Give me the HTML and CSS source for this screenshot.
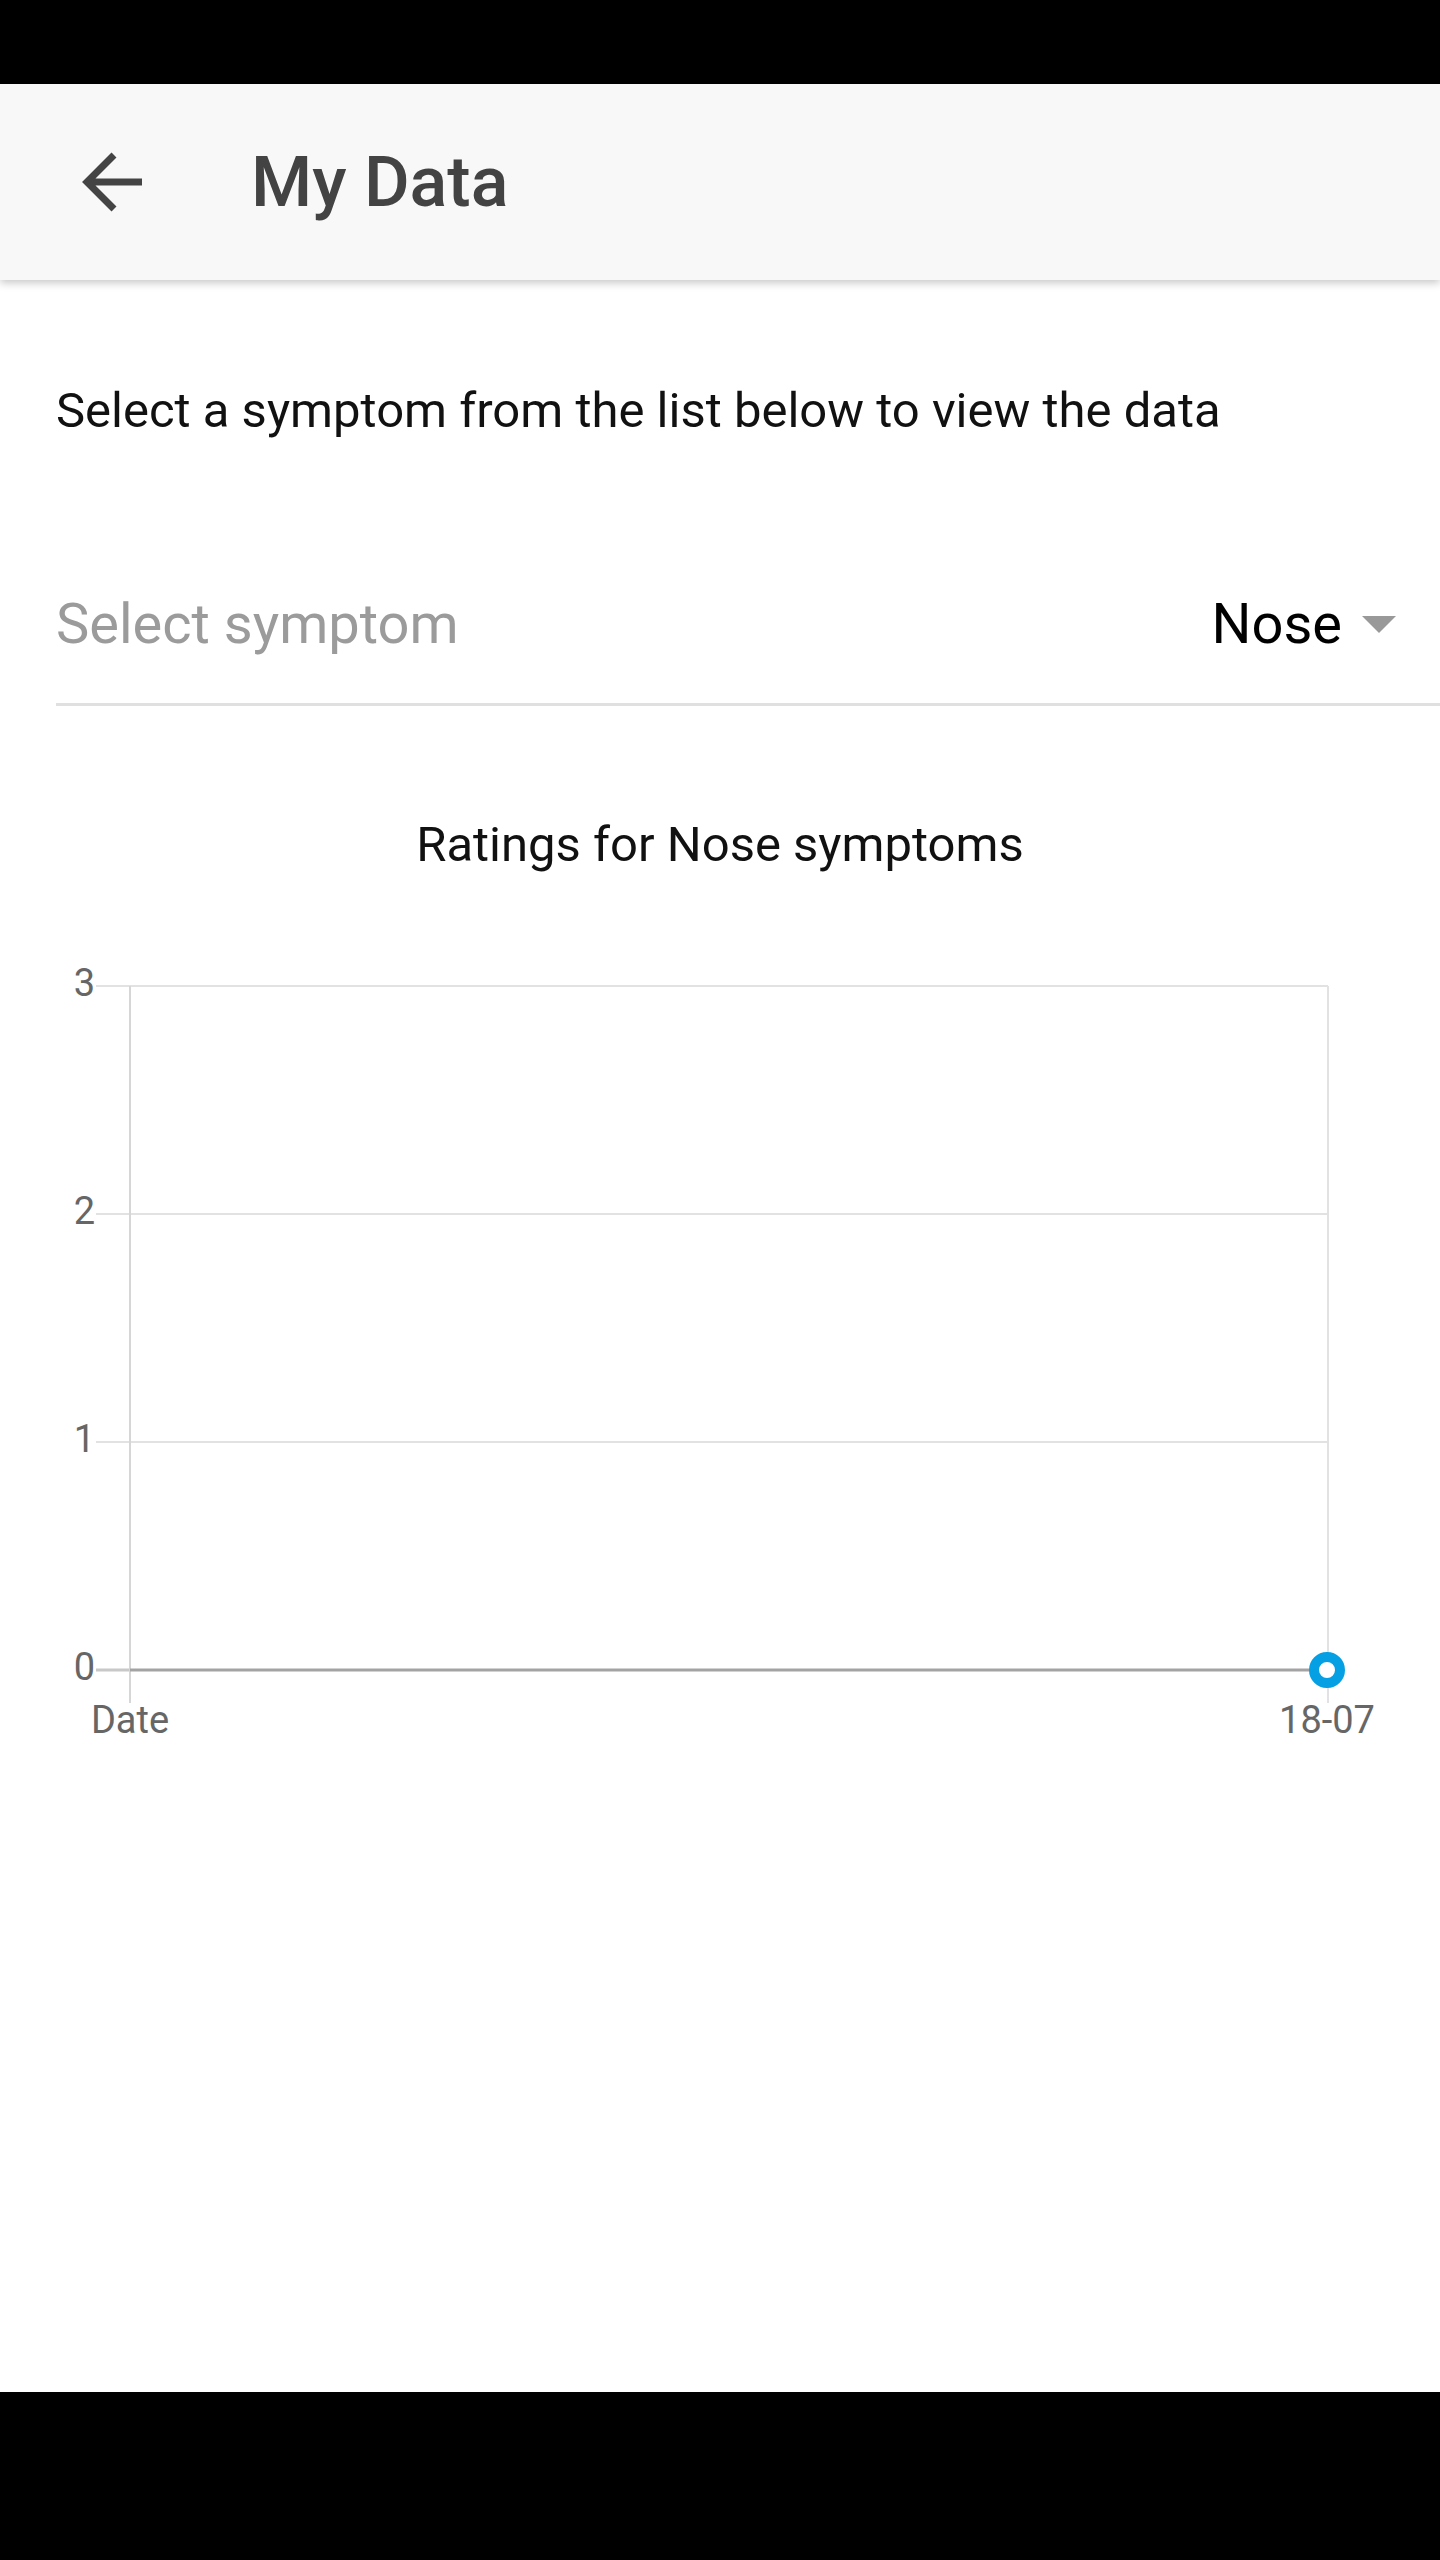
FILE: index.html
```html
<!DOCTYPE html>
<html lang="en">
<head>
<meta charset="utf-8">
<title>My Data</title>
<link rel="stylesheet" href="styles.css">
</head>
<body>
<div class="screen">
  <div class="status-bar"></div>
  <header class="app-bar">
    <svg class="back-icon" width="64" height="64" viewBox="0 0 64 64" aria-hidden="true">
      <path d="M34 5 L7 32 L34 59 M7 32 H62" fill="none" stroke="#444" stroke-width="7" stroke-linejoin="miter"/>
    </svg>
    <h1 class="app-title">My Data</h1>
  </header>
  <main class="content">
    <p class="intro">Select a symptom from the list below to view the data</p>
    <div class="picker">
      <span class="picker-label">Select symptom</span>
      <span class="picker-value">Nose</span>
      <span class="picker-caret"></span>
    </div>
    <h2 class="chart-title">Ratings for Nose symptoms</h2>
    <svg class="chart" width="1440" height="820" viewBox="0 0 1440 820">
      <g stroke="#e2e2e2" stroke-width="2" fill="none">
        <line x1="96" y1="45" x2="1328" y2="45"/>
        <line x1="96" y1="273" x2="1328" y2="273"/>
        <line x1="96" y1="501" x2="1328" y2="501"/>
        <line x1="96" y1="729" x2="130" y2="729" stroke="#c8c8c8" stroke-width="3"/>
        <line x1="130" y1="45" x2="130" y2="762" stroke="#d6d6d6"/>
        <line x1="1328" y1="45" x2="1328" y2="762"/>
      </g>
      <line x1="130" y1="729" x2="1327" y2="729" stroke="#a3a3a3" stroke-width="3"/>
      <g class="axis-label" text-anchor="end">
        <text x="95" y="55">3</text>
        <text x="95" y="283">2</text>
        <text x="95" y="511">1</text>
        <text x="95" y="739">0</text>
      </g>
      <g class="axis-label" text-anchor="middle">
        <text x="130" y="792">Date</text>
        <text x="1327" y="792">18-07</text>
      </g>
      <circle cx="1327" cy="729" r="13" fill="#fff" stroke="#05a0e4" stroke-width="10"/>
    </svg>
  </main>
  <div class="nav-bar"></div>
</div>
</body>
</html>
```
FILE: styles.css
```css
html, body {
  margin: 0;
  padding: 0;
  background: #000;
}

body {
  font-family: Roboto, "Noto Sans", "Liberation Sans", sans-serif;
}

.screen {
  width: 1440px;
  height: 2560px;
  display: flex;
  flex-direction: column;
  background: #fff;
  overflow: hidden;
}

.status-bar {
  height: 84px;
  flex: none;
  background: #000;
}

.app-bar {
  height: 196px;
  flex: none;
  display: flex;
  align-items: center;
  padding-left: 80px;
  background: #f8f8f8;
  box-shadow: 0 3px 8px rgba(0, 0, 0, 0.22);
  position: relative;
  z-index: 1;
}

.back-icon {
  display: block;
  flex: none;
}

.app-title {
  margin: 0 0 0 107px;
  font-size: 70px;
  line-height: 70px;
  font-weight: 500;
  color: #434343;
}

.content {
  flex: 1;
  background: #fff;
  padding-left: 56px;
}

.intro {
  margin: 102px 0 0 0;
  font-size: 49px;
  line-height: 58px;
  color: #111;
}

.picker {
  margin-top: 151px;
  height: 66px;
  padding-bottom: 46px;
  padding-right: 44px;
  display: flex;
  align-items: center;
  border-bottom: 3px solid #e0e0e0;
  font-size: 56px;
  line-height: 66px;
}

.picker-label {
  flex: 1;
  color: #9b9b9b;
}

.picker-value {
  color: #000;
}

.picker-caret {
  margin-left: 20px;
  width: 0;
  height: 0;
  border-left: 17px solid transparent;
  border-right: 17px solid transparent;
  border-top: 17px solid #999;
}

.chart-title {
  margin: 110px 0 0 -56px;
  text-align: center;
  font-size: 49px;
  line-height: 58px;
  font-weight: 400;
  color: #111;
}

.chart {
  display: block;
  margin: 67px 0 0 -56px;
}

.axis-label text {
  font-family: Roboto, "Noto Sans", sans-serif;
  font-size: 38px;
  fill: #666;
}

.nav-bar {
  height: 168px;
  flex: none;
  background: #000;
}
```
